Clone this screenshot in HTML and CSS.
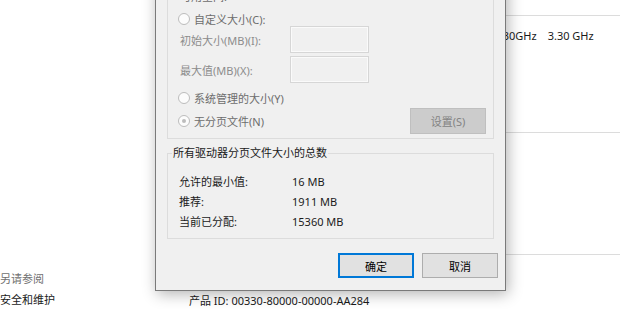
FILE: index.html
```html
<!DOCTYPE html>
<html lang="zh-CN">
<head>
    <meta charset="UTF-8">
    <title>虚拟内存</title>
    <link rel="stylesheet" href="styles.css">
</head>
<body>

<div class="page">
    <!-- left column of the system page -->
    <div class="sidebar">
        <div class="see-also">另请参阅</div>
        <div class="side-link">安全和维护</div>
    </div>

    <!-- system info behind the dialog -->
    <div class="main">
        <div class="section top"></div>
        <div class="section cpu">
            <div class="spec-row">
                <span class="spec-label">处理器:</span>
                <span class="spec-value">Intel(R) Core(TM) i5-4590 CPU @ 3.30GHz</span>
                <span class="spec-speed">3.30 GHz</span>
            </div>
        </div>
        <div class="section middle"></div>
        <div class="section bottom">
            <div class="product">产品 ID: 00330-80000-00000-AA284</div>
        </div>
    </div>
</div>

<!-- Virtual memory dialog -->
<div class="dialog">
    <div class="group paging">
        <div class="row avail">
            <span class="label">可用空间:</span>
        </div>
        <div class="row radio-row first">
            <span class="radio"></span>
            <span>自定义大小(C):</span>
        </div>
        <div class="row field-row">
            <span class="field-label">初始大小(MB)(I):</span>
            <span class="textbox"></span>
        </div>
        <div class="row field-row second">
            <span class="field-label">最大值(MB)(X):</span>
            <span class="textbox"></span>
        </div>
        <div class="row radio-row system">
            <span class="radio"></span>
            <span>系统管理的大小(Y)</span>
        </div>
        <div class="row radio-row last">
            <span class="radio checked"></span>
            <span>无分页文件(N)</span>
            <span class="btn set">设置(S)</span>
        </div>
    </div>

    <div class="group totals">
        <div class="legend">所有驱动器分页文件大小的总数</div>
        <div class="total-row first"><span class="total-label">允许的最小值:</span><span>16 MB</span></div>
        <div class="total-row"><span class="total-label">推荐:</span><span>1911 MB</span></div>
        <div class="total-row"><span class="total-label">当前已分配:</span><span>15360 MB</span></div>
    </div>

    <div class="buttons">
        <span class="btn ok">确定</span>
        <span class="btn">取消</span>
    </div>
</div>

</body>
</html>
```

FILE: styles.css
```css
body {
    margin: 0;
    width: 620px;
    height: 309px;
    overflow: hidden;
    position: relative;
    background-color: #fff;
    font-family: "Noto Sans", "Noto Sans CJK SC", sans-serif;
    font-size: 11px;
    color: #1a1a1a;
}
.page {
    display: flex;
    height: 309px;
}
.sidebar {
    width: 189px;
    display: flex;
    flex-direction: column;
    justify-content: flex-end;
    padding-bottom: 2px;
}
.see-also {
    color: #707070;
    line-height: 14px;
    margin-bottom: 7px;
}
.side-link {
    line-height: 14px;
}
.main {
    flex: 1;
}
.section {
    border-bottom: 1px solid #dcdcdc;
}
.section.top {
    height: 15px;
}
.section.cpu {
    height: 116px;
}
.section.middle {
    height: 121px;
}
.section.bottom {
    border-bottom: none;
    padding-top: 39px;
}
.spec-row {
    display: flex;
    padding-top: 13px;
    line-height: 14px;
    white-space: nowrap;
}
.spec-label {
    width: 137px;
}
.spec-speed {
    margin-left: 11px;
}
.product {
    line-height: 14px;
}

/* dialog */
.dialog {
    position: absolute;
    left: 155px;
    top: -40px;
    width: 351px;
    height: 331px;
    padding-top: 17px;
    box-sizing: border-box;
    background-color: #f0f0f0;
    border: 1px solid #7a7a7a;
    box-shadow: 2px 3px 14px rgba(0, 0, 0, 0.3);
    color: #1a1a1a;
}
.group {
    margin: 0 11px;
    border: 1px solid #dcdcdc;
}
.paging {
    padding: 6px 7px 4px 10px;
    color: #6d6d6d;
}
.row {
    display: flex;
    align-items: center;
}
.avail {
    height: 22px;
    padding-left: 2px;
}
.radio-row {
    height: 20px;
}
.radio-row.first {
    margin-top: 2px;
}
.radio-row.system {
    margin-top: 5px;
}
.radio-row.last {
    height: 26px;
}
.radio {
    width: 10px;
    height: 10px;
    border: 1px solid #bcbcbc;
    border-radius: 50%;
    background-color: #fcfcfc;
    margin-right: 4px;
    position: relative;
}
.radio.checked::after {
    content: "";
    position: absolute;
    left: 3px;
    top: 3px;
    width: 4px;
    height: 4px;
    border-radius: 50%;
    background-color: #bcbcbc;
}
.field-row {
    height: 27px;
    margin-top: -3px;
}
.field-row.second {
    margin-top: 3px;
}
.field-label {
    width: 110px;
    padding-left: 2px;
    color: #8c8c8c;
}
.textbox {
    width: 77px;
    height: 25px;
    border: 1px solid #d6d6d6;
    box-shadow: inset 0 0 0 1px #fafafa;
    background-color: #f0f0f0;
}
.btn {
    display: flex;
    align-items: center;
    justify-content: center;
    width: 74px;
    height: 23px;
    border: 1px solid #adadad;
    background-color: #e1e1e1;
    color: #000;
}
.btn.set {
    margin-left: auto;
    height: 24px;
    background-color: #cccccc;
    border-color: #bfbfbf;
    color: #838383;
}
.totals {
    margin-top: 14px;
    padding: 0 0 7px 11px;
}
.legend {
    width: max-content;
    margin: -8px 0 0 -7px;
    padding: 0 1px;
    line-height: 14px;
    background-color: #f0f0f0;
}
.total-row {
    display: flex;
    align-items: center;
    height: 20px;
}
.total-row.first {
    margin-top: 11px;
}
.total-label {
    width: 113px;
}
.buttons {
    display: flex;
    justify-content: flex-end;
    gap: 8px;
    margin-top: 14px;
    padding-right: 7px;
}
.btn.ok {
    border-color: #0078d7;
    box-shadow: inset 0 0 0 1px #0078d7;
}
```
